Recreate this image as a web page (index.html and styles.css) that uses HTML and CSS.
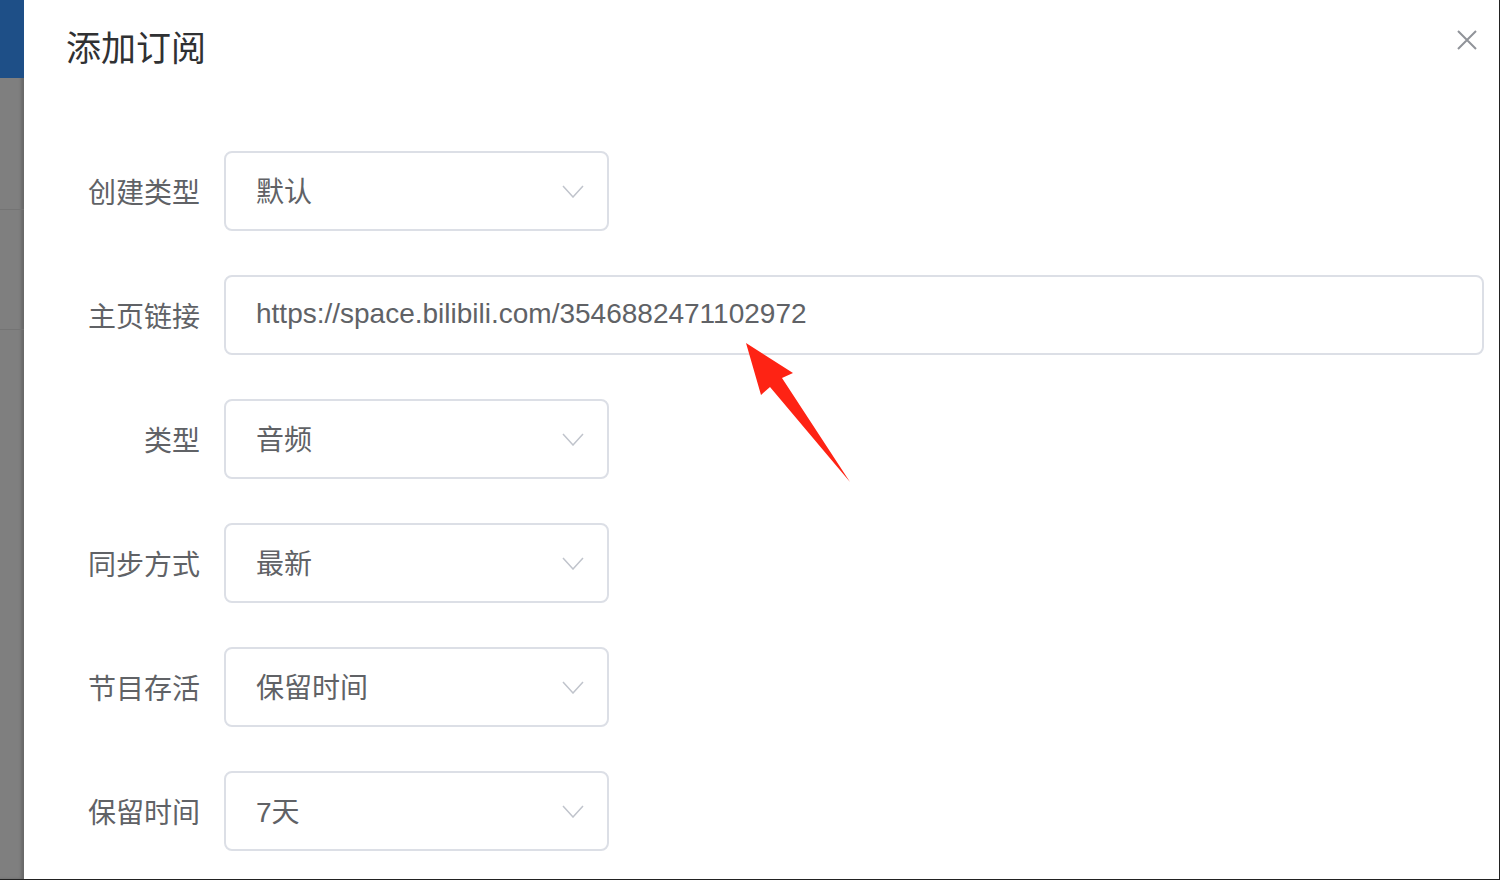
FILE: index.html
```html
<!DOCTYPE html>
<html lang="zh-CN">
<head>
<meta charset="utf-8">
<title>添加订阅</title>
<link rel="stylesheet" href="styles.css">
</head>
<body>
<div class="screen">
  <div class="backdrop">
    <div class="bd-top"></div>
    <div class="bd-row bd-row1"></div>
    <div class="bd-row bd-row2"></div>
  </div>
  <div class="dialog">
    <div class="dialog-header">
      <span class="dialog-title">添加订阅</span>
      <button class="close-btn" aria-label="关闭">
        <svg width="20" height="20" viewBox="0 0 20 20"><path d="M1 1 L19 19 M19 1 L1 19" stroke="#909399" stroke-width="2" fill="none"/></svg>
      </button>
    </div>
    <div class="dialog-body">
      <div class="form-row">
        <label class="form-label">创建类型</label>
        <div class="select"><span class="select-value">默认</span><svg class="chev" width="22" height="13" viewBox="0 0 22 13"><path d="M1 1 L11 12 L21 1" stroke="#c0c4cc" stroke-width="1.5" fill="none"/></svg></div>
      </div>
      <div class="form-row">
        <label class="form-label">主页链接</label>
        <div class="input"><span class="input-value">https://space.bilibili.com/3546882471102972</span></div>
      </div>
      <div class="form-row">
        <label class="form-label">类型</label>
        <div class="select"><span class="select-value">音频</span><svg class="chev" width="22" height="13" viewBox="0 0 22 13"><path d="M1 1 L11 12 L21 1" stroke="#c0c4cc" stroke-width="1.5" fill="none"/></svg></div>
      </div>
      <div class="form-row">
        <label class="form-label">同步方式</label>
        <div class="select"><span class="select-value">最新</span><svg class="chev" width="22" height="13" viewBox="0 0 22 13"><path d="M1 1 L11 12 L21 1" stroke="#c0c4cc" stroke-width="1.5" fill="none"/></svg></div>
      </div>
      <div class="form-row">
        <label class="form-label">节目存活</label>
        <div class="select"><span class="select-value">保留时间</span><svg class="chev" width="22" height="13" viewBox="0 0 22 13"><path d="M1 1 L11 12 L21 1" stroke="#c0c4cc" stroke-width="1.5" fill="none"/></svg></div>
      </div>
      <div class="form-row">
        <label class="form-label">保留时间</label>
        <div class="select"><span class="select-value">7天</span><svg class="chev" width="22" height="13" viewBox="0 0 22 13"><path d="M1 1 L11 12 L21 1" stroke="#c0c4cc" stroke-width="1.5" fill="none"/></svg></div>
      </div>
    </div>
    <svg class="annot-arrow" width="1500" height="880" viewBox="0 0 1500 880">
      <polygon points="746,343 793,373 782,378 850,482 770,387 761,395" fill="#fe2314"/>
    </svg>
  </div>
</div>
</body>
</html>
```

FILE: styles.css
```css
html, body {
  margin: 0;
  padding: 0;
  background: #000;
}
.screen {
  width: 1500px;
  height: 880px;
  display: flex;
  overflow: hidden;
  border-right: 1px solid #222;
  border-bottom: 1px solid #222;
  box-sizing: border-box;
  font-family: "Liberation Sans", "Noto Sans CJK SC", sans-serif;
}
.backdrop {
  width: 24px;
  flex: none;
  background: #7f7f7f;
  display: flex;
  flex-direction: column;
  box-shadow: inset -3px 0 3px rgba(0,0,0,0.18);
}
.bd-top {
  height: 78px;
  background: #1e4f87;
}
.bd-row {
  height: 1px;
  background: #747474;
}
.bd-row1 { margin-top: 131px; }
.bd-row2 { margin-top: 119px; }
.dialog {
  flex: 1;
  background: #fff;
  position: relative;
  display: flex;
  flex-direction: column;
}
.dialog-header {
  height: 100px;
  display: flex;
  align-items: flex-start;
  justify-content: space-between;
  padding: 23px 22px 0 42px;
  box-sizing: border-box;
}
.dialog-title {
  font-family: "Noto Sans CJK SC", sans-serif;
  font-size: 35px;
  line-height: 46px;
  color: #303133;
  font-weight: 400;
}
.close-btn {
  border: none;
  background: none;
  padding: 0;
  margin-top: 7px;
  width: 20px;
  height: 20px;
  cursor: pointer;
}
.dialog-body {
  padding: 51px 15px 0 0;
  display: flex;
  flex-direction: column;
  gap: 44px;
}
.form-row {
  display: flex;
  align-items: center;
}
.form-label {
  width: 200px;
  flex: none;
  text-align: right;
  padding-right: 24px;
  box-sizing: border-box;
  font-family: "Noto Sans CJK SC", sans-serif;
  font-size: 28px;
  line-height: 34px;
  color: #606266;
}
.select, .input {
  height: 80px;
  border: 2px solid #dcdfe6;
  border-radius: 8px;
  box-sizing: border-box;
  display: flex;
  align-items: center;
  padding: 0 23px 0 30px;
  font-size: 28px;
  color: #606266;
}
.select {
  width: 385px;
  justify-content: space-between;
}
.input {
  flex: 1;
}
.select-value, .input-value {
  margin-top: -2px;
}
.chev {
  display: block;
}
.annot-arrow {
  position: absolute;
  left: -24px;
  top: 0;
  pointer-events: none;
}
```
